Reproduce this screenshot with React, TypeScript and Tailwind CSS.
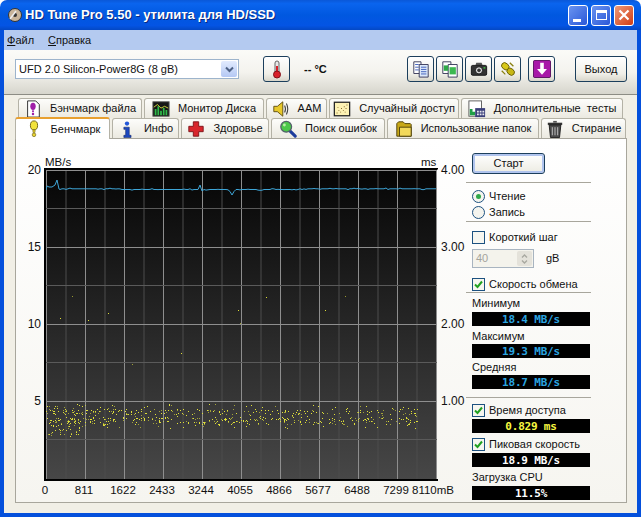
import type { ReactNode } from 'react'

const UI = 'font-["Liberation_Sans",sans-serif] text-[11px] text-[#111]'

/* ── seeded data for the chart ── */
function rng(seed: number) {
  let s = seed
  return () => {
    s = (s * 1664525 + 1013904223) % 4294967296
    return s / 4294967296
  }
}

function linePath() {
  const r = rng(7)
  const pts: string[] = ['46,190', '47,186', '49,187', '52,187', '55,185', '57,180', '59,189']
  for (let x = 60; x <= 436; x += 2) {
    let y = 188.8 + (x > 120 && x < 300 ? 0.7 : 0) + (r() < 0.3 ? r() * 1.6 - 0.8 : 0)
    if (x === 200) y = 185
    if (x === 202) y = 191
    if (x === 232) y = 195
    if (x === 230 || x === 234) y = 191.5
    pts.push(`${x},${y.toFixed(1)}`)
  }
  return 'M' + pts.join(' L')
}

function scatter() {
  const r = rng(42)
  const out: [number, number][] = []
  for (let i = 0; i < 600; i++) {
    const x = 46 + Math.pow(r(), 1.25) * 372
    const roll = r()
    let y: number
    if (roll < 0.3) y = 409 + r() * 5
    else if (roll < 0.68) y = 417 + r() * 7
    else y = 404 + r() * 24
    out.push([Math.round(x), Math.round(y)])
  }
  for (let i = 0; i < 32; i++) out.push([Math.round(47 + r() * 33), Math.round(425 + r() * 11)])
  const sparse: [number, number][] = [
    [60, 318], [72, 296], [88, 320], [108, 313], [132, 364], [181, 353], [238, 310], [240, 323], [266, 297], [325, 310], [345, 296],
  ]
  return [...out, ...sparse]
}

/* ── small icons ── */
const icons: Record<string, ReactNode> = {
  file: (
    <>
      <path d="M4 1h9l4 4v14H4z" fill="#fff" stroke="#222" />
      <ellipse cx="10" cy="7" rx="3" ry="4" fill="#a01fa8" />
      <rect x="9" y="11.5" width="2" height="2" fill="#a01fa8" />
      <circle cx="10" cy="15.5" r="1.4" fill="#a01fa8" />
    </>
  ),
  monitor: (
    <>
      <rect x="1" y="2" width="18" height="16" fill="#161616" stroke="#555" />
      <path d="M3 17V10h2v7zM6 17V7h2v10zM9 17v-5h2v5zM12 17V9h2v8zM15 17v-6h2v6z" fill="#2fb84a" />
      <path d="M2 8l4-3 4 4 4-2 4 2" fill="none" stroke="#d8e040" />
    </>
  ),
  aam: (
    <>
      <path d="M2 7h4l6-5v16l-6-5H2z" fill="#e8c92a" stroke="#5a4a10" />
      <path d="M14 6q2 4 0 8M16 4q3 6 0 12" fill="none" stroke="#444" strokeWidth="1.2" />
    </>
  ),
  random: (
    <>
      <rect x="1.5" y="2.5" width="17" height="15" fill="#fdf2b4" stroke="#222" strokeWidth="1.4" />
      <path d="M4 14h1v1H4zM6 11h1v1H6zM8 13h1v1H8zM9 9h1v1H9zM11 11h1v1h-1zM12 7h1v1h-1zM14 9h1v1h-1zM15 5h1v1h-1zM13 13h1v1h-1zM5 8h1v1H5z" fill="#7a5a20" />
    </>
  ),
  extra: (
    <>
      <rect x="1" y="1" width="14" height="17" fill="#fff" stroke="#555" />
      <path d="M2 17v-7h3v7zM5 17v-4h3v4z" fill="#1fa046" />
      <rect x="8" y="9" width="11" height="10" fill="#3a3f7a" />
      <path d="M10 12h2v2h-2zM13 12h2v2h-2zM16 12h2v2h-2zM10 15h2v2h-2zM13 15h2v2h-2zM16 15h2v2h-2z" fill="#e8e8ee" />
    </>
  ),
  bench: (
    <>
      <ellipse cx="10" cy="6" rx="4" ry="5" fill="#f2e23a" stroke="#6a5c10" />
      <rect x="8.8" y="11" width="2.4" height="3" fill="#d8c428" stroke="#6a5c10" strokeWidth="0.5" />
      <circle cx="10" cy="16.5" r="2" fill="#e8d430" stroke="#6a5c10" strokeWidth="0.7" />
    </>
  ),
  info: (
    <>
      <circle cx="10" cy="4" r="2.4" fill="#2458d8" />
      <path d="M6.5 8h6v9h2v2.4h-8V17h2V10.4h-2z" fill="#1c48c0" stroke="#0c2060" strokeWidth="0.6" />
    </>
  ),
  health: <path d="M7 2h6v5h5v6h-5v5H7v-5H2V7h5z" fill="#d8262c" stroke="#7a1216" />,
  search: (
    <>
      <path d="M11 11l7 7" stroke="#1c3c9c" strokeWidth="3.4" strokeLinecap="round" />
      <circle cx="8" cy="7.5" r="6" fill="#4cc84a" stroke="#54606a" strokeWidth="1.4" />
      <circle cx="6" cy="5.5" r="1.6" fill="#b8f0a8" />
    </>
  ),
  folder: (
    <>
      <path d="M2 18V4l2-2h5l2 2h6l1 1v13z" fill="#c8a818" stroke="#4a3c08" />
      <path d="M5 18V8h13v10z" fill="#f2d95a" stroke="#4a3c08" />
    </>
  ),
  trash: (
    <>
      <path d="M2 3h16v2.5H2z" fill="#333" />
      <path d="M8 1h4v2H8z" fill="#555" />
      <path d="M3.5 5.5h13L15 19.5H5z" fill="#4a4a4a" stroke="#1a1a1a" />
      <path d="M7 8v9M10 8v9M13 8v9" stroke="#c8c8c8" />
    </>
  ),
  thermo: (
    <>
      <rect x="8" y="2" width="4" height="12" rx="2" fill="#e8e8e8" stroke="#666" />
      <rect x="9" y="7" width="2" height="8" fill="#d8202a" />
      <circle cx="10" cy="15.5" r="3.5" fill="#d8202a" stroke="#801018" />
    </>
  ),
  copy: (
    <>
      <path d="M2 2h8v13H2z" fill="#fff" stroke="#335" />
      <path d="M8 5h10v14H8z" fill="#dce8fa" stroke="#335" />
      <path d="M10 8h6M10 10.5h6M10 13h6M10 15.5h6M3.5 5h4M3.5 8h4M3.5 11h4" stroke="#3858b8" />
    </>
  ),
  copy2: (
    <>
      <path d="M2 2h9v13H2z" fill="#fff" stroke="#335" />
      <path d="M8 5h10v14H8z" fill="#fff" stroke="#335" />
      <rect x="3" y="6" width="5" height="6" fill="#2fa848" />
      <rect x="9.5" y="8" width="7" height="8" fill="#3cb850" />
    </>
  ),
  camera: (
    <>
      <path d="M7 3h6l1 3H6z" fill="#555" />
      <rect x="1.5" y="6" width="17" height="11" rx="1.5" fill="#333" stroke="#111" />
      <circle cx="10" cy="11.5" r="4" fill="#ddd" stroke="#111" />
      <circle cx="10" cy="11.5" r="2" fill="#333" />
      <rect x="15" y="8" width="2" height="1.5" fill="#4c4" />
    </>
  ),
  coins: (
    <>
      <ellipse cx="7" cy="7" rx="4.5" ry="3.5" fill="#d8c818" stroke="#6a6008" transform="rotate(40 7 7)" />
      <ellipse cx="13" cy="13" rx="4.5" ry="3.5" fill="#c8b814" stroke="#6a6008" transform="rotate(40 13 13)" />
      <path d="M3 12l4 4M12 3l4 4" stroke="#8a8010" strokeWidth="1.4" />
    </>
  ),
  save: (
    <>
      <rect x="0.5" y="0.5" width="19" height="19" rx="1.5" fill="#a818a8" stroke="#500858" />
      <path d="M8 3h4v7h3.5L10 16.5 4.5 10H8z" fill="#fff" />
    </>
  ),
}

function Icon({ name, size = 18 }: { name: string; size?: number }) {
  return (
    <svg width={size} height={size} viewBox="0 0 20 20" className="shrink-0">
      {icons[name]}
    </svg>
  )
}

/* ── tabs ── */
const row1 = [
  { w: 124, icon: 'file', label: 'Бэнчмарк файла' },
  { w: 120, icon: 'monitor', label: 'Монитор Диска' },
  { w: 61, icon: 'aam', label: 'AAM' },
  { w: 130, icon: 'random', label: 'Случайный доступ' },
  { w: 162, icon: 'extra', label: 'Дополнительные  тесты' },
]
const row2 = [
  { w: 67, icon: 'info', label: 'Инфо' },
  { w: 88, icon: 'health', label: 'Здоровье' },
  { w: 114, icon: 'search', label: 'Поиск ошибок' },
  { w: 152, icon: 'folder', label: 'Использование папок' },
  { w: 85, icon: 'trash', label: 'Стирание' },
]

function Tab({ w, icon, label }: { w: number; icon: string; label: string }) {
  return (
    <div
      style={{ width: w }}
      className="h-[20px] flex items-center justify-center gap-[8px] whitespace-pre rounded-t-[3px] border border-b-0 border-[#b4b2a6] bg-[linear-gradient(#fdfdfb,#ebe9e0)]"
    >
      <Icon name={icon} />
      <span>{label}</span>
    </div>
  )
}

/* ── toolbar button ── */
function ToolBtn({ w = 27, children }: { w?: number; children: ReactNode }) {
  return (
    <div
      style={{ width: w }}
      className="h-[26px] flex items-center justify-center rounded-[3px] border border-[#1c3f5c] bg-[linear-gradient(#ffffff,#f0efe8_70%,#d8d6ca)]"
    >
      {children}
    </div>
  )
}

/* ── right column pieces ── */
function Sep({ mt }: { mt: string }) {
  return <div className={`${mt} h-px bg-[#a8a69c] w-[125px] -ml-[6px]`} />
}

function Check({ checked, label, h, mt }: { checked: boolean; label: string; h: string; mt: string }) {
  return (
    <div className={`${mt} ${h} flex items-center gap-[4px]`}>
      <div className="w-[13px] h-[13px] border border-[#1c5180] bg-[#f6f6f0] flex items-center justify-center">
        {checked && (
          <svg width="9" height="9" viewBox="0 0 9 9">
            <path d="M1 4.5l2.5 2.5L8 1.5" fill="none" stroke="#21a121" strokeWidth="2" />
          </svg>
        )}
      </div>
      <span>{label}</span>
    </div>
  )
}

function Radio({ on, label }: { on?: boolean; label: string }) {
  return (
    <div className="h-[16px] flex items-center gap-[4px]">
      <div className="w-[13px] h-[13px] rounded-full border border-[#1c5180] bg-[#f4f4ee] flex items-center justify-center">
        {on && <div className="w-[5px] h-[5px] rounded-full bg-[#2fa84a]" />}
      </div>
      <span>{label}</span>
    </div>
  )
}

function Value({ text, color, mt }: { text: string; color: string; mt: string }) {
  return (
    <div
      className={`${mt} ${color} h-[14px] w-[118px] bg-black flex items-center justify-center font-["DejaVu_Sans_Mono",monospace] font-bold text-[11px] tracking-[-0.2px] leading-none`}
    >
      {text}
    </div>
  )
}

function Label({ text, mt }: { text: string; mt: string }) {
  return <div className={`${mt} h-[15px] leading-[15px]`}>{text}</div>
}

/* ── chart ── */
function Chart() {
  const majorsX = Array.from({ length: 11 }, (_, i) => 46 + 39 * i)
  const xLabels = ['0', '811', '1622', '2433', '3244', '4055', '4866', '5677', '6488', '7299']
  const majorsY = [170, 247, 324, 401]
  const minorsY = [208.5, 285.5, 362.5, 439.5]
  return (
    <svg width={450} height={363} viewBox="16 139 450 363" className="shrink-0">
      <defs>
        <linearGradient id="plot" x1="0" y1="0" x2="0" y2="1">
          <stop offset="0" stopColor="#050505" />
          <stop offset="1" stopColor="#474747" />
        </linearGradient>
      </defs>
      <rect x={45} y={168} width={392} height={312} fill="url(#plot)" />
      {majorsX.map(x => (
        <line key={x} x1={x + 0.5} x2={x + 0.5} y1={170} y2={479} stroke="#8e8e8e" />
      ))}
      {majorsX.slice(0, 10).map(x => (
        <line key={x} x1={x + 20} x2={x + 20} y1={170} y2={479} stroke="#4c4c4c" />
      ))}
      {majorsY.map(y => (
        <line key={y} x1={45} x2={437} y1={y + 0.5} y2={y + 0.5} stroke="#8e8e8e" />
      ))}
      {minorsY.map(y => (
        <line key={y} x1={45} x2={437} y1={y} y2={y} stroke="#5a5a5a" />
      ))}
      {scatter().map(([x, y], i) => (
        <rect key={i} x={x} y={y} width={1} height={1} fill="#e8e838" fillOpacity={i % 3 === 0 ? 0.6 : 0.95} />
      ))}
      <path d={linePath()} fill="none" stroke="#3ea6d8" strokeWidth={1} />
      <rect x={44} y={168} width={2} height={313} fill="#000" />
      <rect x={44} y={479} width={394} height={2} fill="#000" />
      <rect x={44} y={168} width={394} height={1.5} fill="#000" />

      <g fontFamily='"Liberation Sans", sans-serif' fontSize="12" fill="#111">
        {['20', '15', '10', '5'].map((t, i) => (
          <text key={t} x={41} y={majorsY[i] + 4} textAnchor="end">
            {t}
          </text>
        ))}
        {['4.00', '3.00', '2.00', '1.00'].map((t, i) => (
          <text key={t} x={441} y={majorsY[i] + 4}>
            {t}
          </text>
        ))}
        {xLabels.map((t, i) => (
          <text key={t} x={45 + 39 * i} y={494} textAnchor="middle" fontSize="11.5">
            {t}
          </text>
        ))}
        <text x={454} y={494} textAnchor="end" fontSize="11.5">
          8110mB
        </text>
        <text x={45} y={166} fontSize="11.5">
          MB/s
        </text>
        <text x={421} y={166} fontSize="11.5">
          ms
        </text>
      </g>
    </svg>
  )
}

function CaptionBtn({ className, children }: { className: string; children: ReactNode }) {
  return (
    <div className={`w-[20px] h-[21px] rounded-[3px] border border-white flex items-center justify-center ${className}`}>
      {children}
    </div>
  )
}

export default function App() {
  return (
    <div className={`${UI} w-[641px] h-[517px] flex flex-col overflow-hidden bg-[#fff]`}>
      {/* ── Title bar ── */}
      <div className="h-[30px] shrink-0 rounded-t-[7px] flex items-center pl-[7px] pr-[7px] bg-[linear-gradient(#0a58d8,#0a64ee_12%,#0058e0_50%,#0454e4_85%,#0448c4)]">
        <svg width="16" height="16" viewBox="0 0 16 16" className="shrink-0">
          <circle cx="8" cy="8" r="6.5" fill="#c8b49a" stroke="#333" />
          <circle cx="8" cy="8" r="2" fill="#333" />
          <path d="M3 12l6-8" stroke="#eee" strokeWidth="1.5" />
        </svg>
        <span className="ml-[2px] font-bold text-[13px] whitespace-pre text-white [text-shadow:1px_1px_#0a2a80]">
          HD Tune Pro 5.50 - утилита для HD/SSD
        </span>
        <div className="ml-auto flex gap-[3px]">
          <CaptionBtn className="bg-[linear-gradient(135deg,#6a94f0,#2a58d8)]">
            <div className="w-[8px] h-[3px] bg-white mt-[10px] -ml-[2px]" />
          </CaptionBtn>
          <CaptionBtn className="bg-[linear-gradient(135deg,#6a94f0,#2a58d8)]">
            <div className="w-[11px] h-[10px] border border-t-[3px] border-white" />
          </CaptionBtn>
          <CaptionBtn className="bg-[linear-gradient(135deg,#ee9a78,#d03c14)]">
            <svg width="12" height="12" viewBox="0 0 12 12">
              <path d="M1.5 1.5l9 9M10.5 1.5l-9 9" stroke="#fff" strokeWidth="2.2" />
            </svg>
          </CaptionBtn>
        </div>
      </div>

      {/* ── Window body with blue frame ── */}
      <div className="flex-1 min-h-0 flex flex-col border-x-[4px] border-b-[4px] border-[#0450dc]">
        {/* ── Menu ── */}
        <div className="h-[20px] shrink-0 bg-[#b4caf0] flex items-center pl-[3px] gap-[14px]">
          <span>
            <u>Ф</u>айл
          </span>
          <span>
            <u>С</u>правка
          </span>
        </div>

        {/* ── Toolbar ── */}
        <div className="h-[45px] shrink-0 border-b border-[#8c8c84] bg-[linear-gradient(#fbfbf8,#f4f3ee_50%,#d6d5cc)] flex items-center pl-[11px] pb-[6px]">
          <div className="w-[224px] h-[20px] bg-white border border-[#9db4cc] flex items-center pl-[3px] pr-[1px]">
            <span>UFD 2.0 Silicon-Power8G (8 gB)</span>
            <div className="ml-auto w-[16px] h-[16px] rounded-[2px] bg-[linear-gradient(#e2ebfe,#b4c8f4)] flex items-center justify-center">
              <svg width="9" height="7" viewBox="0 0 9 7">
                <path d="M1 1.5l3.5 3.5L8 1.5" fill="none" stroke="#4d6185" strokeWidth="2" />
              </svg>
            </div>
          </div>
          <div className="ml-[24px]">
            <ToolBtn>
              <Icon name="thermo" size={20} />
            </ToolBtn>
          </div>
          <span className="ml-[14px] font-bold w-[103px]">-- °C</span>
          <div className="flex gap-[2px]">
            <ToolBtn>
              <Icon name="copy" />
            </ToolBtn>
            <ToolBtn>
              <Icon name="copy2" />
            </ToolBtn>
            <ToolBtn>
              <Icon name="camera" />
            </ToolBtn>
            <ToolBtn>
              <Icon name="coins" />
            </ToolBtn>
          </div>
          <div className="ml-[7px]">
            <ToolBtn>
              <Icon name="save" />
            </ToolBtn>
          </div>
          <div className="ml-[20px]">
            <ToolBtn w={52}>Выход</ToolBtn>
          </div>
        </div>

        {/* ── Tabs + panel ── */}
        <div className="flex-1 min-h-0 bg-[#f1efe6] flex flex-col pl-[11px] pt-[3px]">
          <div className="flex gap-[2px] pl-[3px] h-[20px]">
            {row1.map(t => (
              <Tab key={t.label} {...t} />
            ))}
          </div>
          <div className="flex gap-[2px] h-[20px] items-end">
            <div className="relative z-10 w-[95px] h-[22px] -mb-px flex items-center justify-center gap-[8px] rounded-t-[3px] border-x border-[#b4b2a6] border-t-[2px] border-t-[#e8a030] bg-white">
              <Icon name="bench" />
              <span>Бенчмарк</span>
            </div>
            {row2.map(t => (
              <Tab key={t.label} {...t} />
            ))}
          </div>
          <div className="w-[612px] h-[365px] shrink-0 border border-[#a8a69c] bg-[linear-gradient(#ffffff,#f6f5f0)] flex">
            <Chart />
            {/* ── Right column ── */}
            <div className="pl-[6px] pt-[14px] flex flex-col">
              <div className="w-[73px] h-[21px] rounded-[3px] border border-[#1c3f5c] shadow-[inset_0_0_0_2px_#b0c4ee] bg-[linear-gradient(#ffffff,#ecebe2)] flex items-center justify-center">
                Старт
              </div>
              <Sep mt="mt-[8px]" />
              <div className="mt-[5px]">
                <Radio on label="Чтение" />
                <Radio label="Запись" />
              </div>
              <Sep mt="mt-px" />
              <Check checked={false} label="Короткий шаг" h="h-[16px]" mt="mt-[7px]" />
              <div className="mt-[4px] h-[19px] flex items-center">
                <div className="w-[62px] h-[19px] border border-[#a8b4c0] bg-[#f4f3ec] flex items-center pl-[3px] text-[#a4a49c]">
                  40
                  <div className="ml-auto mr-px w-[15px] h-[15px] bg-[#e4e2da] rounded-[2px] flex flex-col items-center justify-center gap-[2px]">
                    <svg width="7" height="4" viewBox="0 0 7 4">
                      <path d="M1 3.5l2.5-2.5L6 3.5" fill="none" stroke="#a8a8a0" strokeWidth="1.4" />
                    </svg>
                    <svg width="7" height="4" viewBox="0 0 7 4">
                      <path d="M1 .5l2.5 2.5L6 .5" fill="none" stroke="#a8a8a0" strokeWidth="1.4" />
                    </svg>
                  </div>
                </div>
                <span className="ml-[12px]">gB</span>
              </div>
              <Check checked label="Скорость обмена" h="h-[15px]" mt="mt-[9px]" />
              <Sep mt="mt-0" />
              <Label text="Минимум" mt="mt-[3px]" />
              <Value text="18.4 MB/s" color="text-[#2aa5e0]" mt="mt-px" />
              <Label text="Максимум" mt="mt-[3px]" />
              <Value text="19.3 MB/s" color="text-[#2aa5e0]" mt="mt-0" />
              <Label text="Средняя" mt="mt-[2px]" />
              <Value text="18.7 MB/s" color="text-[#2aa5e0]" mt="mt-0" />
              <Sep mt="mt-[8px]" />
              <Check checked label="Время доступа" h="h-[15px]" mt="mt-[5px]" />
              <Value text="0.829 ms" color="text-[#f8f840]" mt="mt-px" />
              <Check checked label="Пиковая скорость" h="h-[15px]" mt="mt-[4px]" />
              <Value text="18.9 MB/s" color="text-white" mt="mt-px" />
              <Label text="Загрузка CPU" mt="mt-[3px]" />
              <Value text="11.5%" color="text-white" mt="mt-px" />
            </div>
          </div>
        </div>
      </div>
    </div>
  )
}
